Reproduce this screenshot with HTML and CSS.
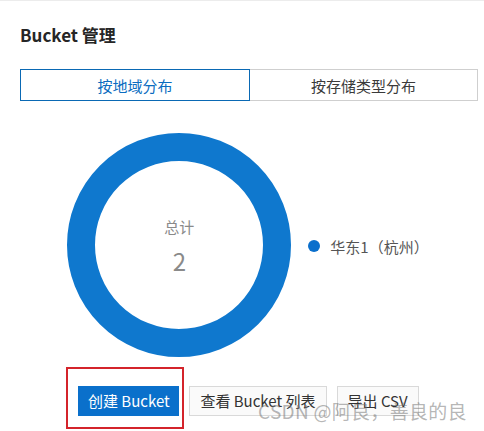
FILE: index.html
```html
<!DOCTYPE html>
<html lang="zh-CN">
<head>
<meta charset="utf-8">
<title>Bucket 管理</title>
<link rel="stylesheet" href="styles.css">
</head>
<body>
<div class="page">
  <h2 class="title">Bucket 管理</h2>
  <div class="tabs">
    <div class="tab tab-active">按地域分布</div>
    <div class="tab">按存储类型分布</div>
  </div>
  <div class="chart">
    <div class="donut">
      <svg width="224" height="224" viewBox="0 0 224 224">
        <circle cx="112" cy="112" r="98" fill="none" stroke="#0f78ce" stroke-width="28"/>
      </svg>
      <div class="donut-label">
        <div class="donut-caption">总计</div>
        <div class="donut-value">2</div>
      </div>
    </div>
    <div class="legend">
      <span class="legend-dot"></span>
      <span class="legend-text">华东1（杭州）</span>
    </div>
  </div>
  <div class="actions">
    <div class="primary-wrap">
      <button class="btn btn-primary">创建 Bucket</button>
      <span class="highlight"></span>
    </div>
    <button class="btn">查看 Bucket 列表</button>
    <button class="btn">导出 CSV</button>
  </div>
  <div class="watermark">CSDN @阿良，善良的良</div>
</div>
</body>
</html>
```

FILE: styles.css
```css
html, body {
  margin: 0;
  padding: 0;
  background: #ffffff;
}
body {
  font-family: "Noto Sans CJK SC", "Noto Sans", sans-serif;
  color: #333333;
}
.page {
  position: relative;
  width: 484px;
  height: 431px;
  box-sizing: border-box;
  padding: 22px 6px 0 20px;
  border-top: 1px solid #ececec;
  overflow: hidden;
}
.title {
  margin: 0;
  font-size: 17px;
  line-height: 24px;
  font-weight: 600;
  color: #262626;
}
.tabs {
  display: flex;
  margin-top: 22px;
  height: 32px;
}
.tab {
  box-sizing: border-box;
  height: 32px;
  display: flex;
  align-items: center;
  justify-content: center;
  font-size: 15px;
  color: #3a3a3a;
  border: 1px solid #cfcfcf;
  border-left: none;
  flex: 1 1 0;
}
.tab-active {
  flex: 0 0 230px;
  color: #0a6cc0;
  border: 1px solid #0a69b4;
}
.chart {
  display: flex;
  align-items: center;
  justify-content: center;
  margin-top: 32px;
  padding-right: 2px;
}
.donut {
  position: relative;
  width: 224px;
  height: 224px;
}
.donut svg {
  display: block;
}
.donut-label {
  position: absolute;
  inset: 0;
  display: flex;
  flex-direction: column;
  align-items: center;
  justify-content: center;
  color: #8a8a8a;
  padding-top: 2px;
}
.donut-caption {
  font-size: 15px;
  line-height: 22px;
}
.donut-value {
  font-size: 24px;
  line-height: 30px;
  margin-top: 8px;
}
.legend {
  display: flex;
  align-items: center;
  margin-left: 17px;
  margin-top: 2px;
}
.legend-dot {
  width: 12px;
  height: 12px;
  border-radius: 50%;
  background: #0a6fcc;
}
.legend-text {
  margin-left: 10px;
  font-size: 15px;
  color: #555555;
}
.actions {
  display: flex;
  justify-content: center;
  align-items: flex-start;
  gap: 10px;
  margin-top: 29px;
  padding-right: 1px;
}
.primary-wrap {
  position: relative;
  display: flex;
}
.btn {
  box-sizing: border-box;
  height: 30px;
  padding: 0 10px;
  font-family: inherit;
  font-size: 15px;
  color: #333333;
  background: #fafafa;
  border: 1px solid #d9d9d9;
  border-radius: 0;
  line-height: 28px;
  margin: 0;
}
.btn-primary {
  width: 101px;
  padding: 0;
  color: #ffffff;
  background: #0a70cb;
  border-color: #0a70cb;
}
.highlight {
  position: absolute;
  left: -12px;
  top: -19px;
  width: 118px;
  height: 62px;
  box-sizing: border-box;
  border: 2px solid #d4242b;
  pointer-events: none;
}
.watermark {
  position: absolute;
  left: 258px;
  top: 397px;
  font-size: 19px;
  line-height: 26px;
  color: rgba(120, 120, 120, 0.55);
  white-space: nowrap;
  letter-spacing: 0.3px;
}
```
